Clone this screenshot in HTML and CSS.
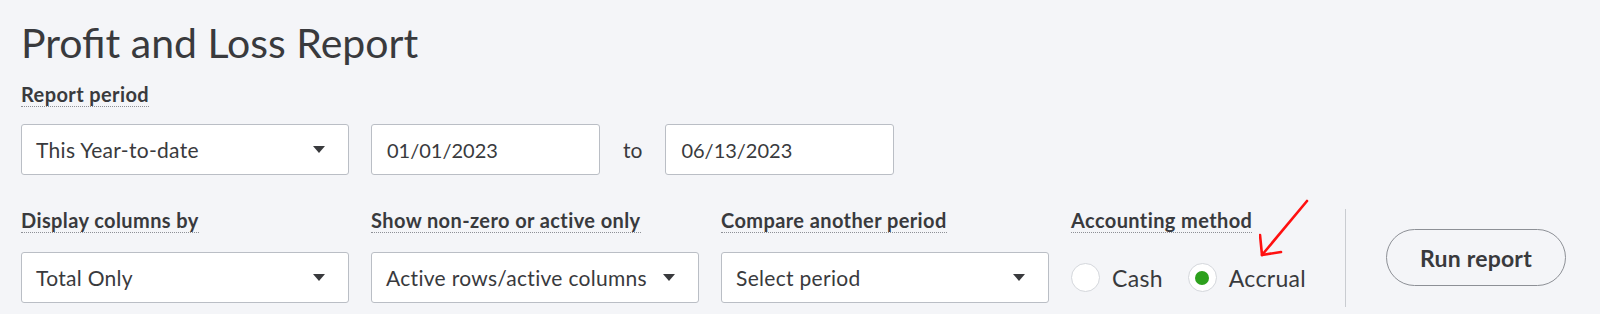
FILE: index.html
```html
<!DOCTYPE html>
<html lang="en">
<head>
<meta charset="utf-8">
<title>Profit and Loss Report</title>
<link rel="stylesheet" href="styles.css">
</head>
<body>
<main class="page">
  <h1 class="title">Profit and Loss Report</h1>
  <section class="period">
    <span class="label">Report period</span>
    <div class="row1">
      <div class="select wide">
        <span>This Year-to-date</span>
        <span class="caret"></span>
      </div>
      <div class="input first">01/01/2023</div>
      <span class="to">to</span>
      <div class="input">06/13/2023</div>
    </div>
  </section>
  <section class="row2">
    <div class="field">
      <span class="label">Display columns by</span>
      <div class="select wide"><span>Total Only</span><span class="caret"></span></div>
    </div>
    <div class="field">
      <span class="label">Show non-zero or active only</span>
      <div class="select wide"><span>Active rows/active columns</span><span class="caret"></span></div>
    </div>
    <div class="field">
      <span class="label">Compare another period</span>
      <div class="select wide"><span>Select period</span><span class="caret"></span></div>
    </div>
    <div class="field acct">
      <span class="label">Accounting method</span>
      <div class="radios">
        <label class="radio"><span class="dot"></span><span>Cash</span></label>
        <label class="radio"><span class="dot on"></span><span>Accrual</span></label>
      </div>
      <svg class="annot" width="60" height="64" viewBox="0 0 60 64" aria-hidden="true">
        <path d="M48 2 L3 56" stroke="#ff1010" stroke-width="2.6" fill="none" stroke-linecap="round"/>
        <path d="M1 36 L3 56 L22 53" stroke="#ff1010" stroke-width="2.6" fill="none" stroke-linecap="round" stroke-linejoin="round"/>
      </svg>
    </div>
    <div class="divider"></div>
    <div class="runwrap"><button class="run">Run report</button></div>
  </section>
</main>
</body>
</html>
```
FILE: styles.css
```css
html, body {
  margin: 0;
  padding: 0;
  background: #f4f5f8;
}
body {
  font-family: Lato, "Open Sans", sans-serif;
  color: #393a3d;
}
.page {
  padding: 19px 0 0 21px;
}
.title {
  margin: 0;
  font-size: 41px;
  line-height: 48px;
  font-weight: 400;
  color: #393a3d;
}
.label {
  display: inline-block;
  font-size: 20px;
  line-height: 22px;
  letter-spacing: 0.4px;
  font-weight: 700;
  padding-bottom: 1px;
  border-bottom: 1px dotted #8d9096;
  color: #393a3d;
}
.period {
  margin-top: 16px;
}
.row1 {
  display: flex;
  align-items: center;
  margin-top: 17px;
}
.select, .input {
  box-sizing: border-box;
  height: 51px;
  background: #fff;
  border: 1px solid #babec5;
  border-radius: 3px;
  display: flex;
  align-items: center;
  color: #393a3d;
}
.select {
  justify-content: space-between;
  font-size: 21px;
  letter-spacing: 0.3px;
  padding: 0 23px 0 14px;
}
.wide {
  width: 328px;
}
.input {
  width: 229px;
  font-size: 20px;
  padding-left: 15px;
}
.input.first {
  margin-left: 22px;
}
.to {
  font-size: 21px;
  margin: 0 23px 0 23px;
}
.caret {
  width: 0;
  height: 0;
  border-left: 6px solid transparent;
  border-right: 6px solid transparent;
  border-top: 7px solid #393a3d;
}
.row2 {
  display: flex;
  align-items: flex-start;
  margin-top: 34px;
}
.field {
  display: flex;
  flex-direction: column;
  align-items: flex-start;
  margin-right: 22px;
}
.field .select {
  margin-top: 19px;
}
.acct {
  position: relative;
  width: 253px;
  margin-right: 21px;
}
.radios {
  display: flex;
  align-items: center;
  height: 51px;
  margin-top: 19px;
}
.radio {
  display: flex;
  align-items: center;
  font-size: 23px;
  letter-spacing: 0.3px;
  margin-right: 25px;
}
.dot {
  box-sizing: border-box;
  width: 29px;
  height: 29px;
  border-radius: 50%;
  background: #fff;
  border: 1px solid #d4d7dc;
  margin-right: 12px;
  display: flex;
  align-items: center;
  justify-content: center;
}
.dot.on::after {
  content: "";
  width: 14px;
  height: 14px;
  border-radius: 50%;
  background: #2ca01c;
}
.annot {
  position: absolute;
  left: 188px;
  top: -10px;
}
.divider {
  width: 1px;
  height: 98px;
  background: #c9ccd1;
}
.runwrap {
  padding: 20px 0 0 40px;
}
.run {
  box-sizing: border-box;
  width: 180px;
  height: 57px;
  border-radius: 29px;
  border: 1.5px solid #8d9096;
  background: transparent;
  font-family: Lato, "Open Sans", sans-serif;
  font-size: 23px;
  letter-spacing: 0.2px;
  font-weight: 700;
  color: #393a3d;
  cursor: pointer;
}
```
